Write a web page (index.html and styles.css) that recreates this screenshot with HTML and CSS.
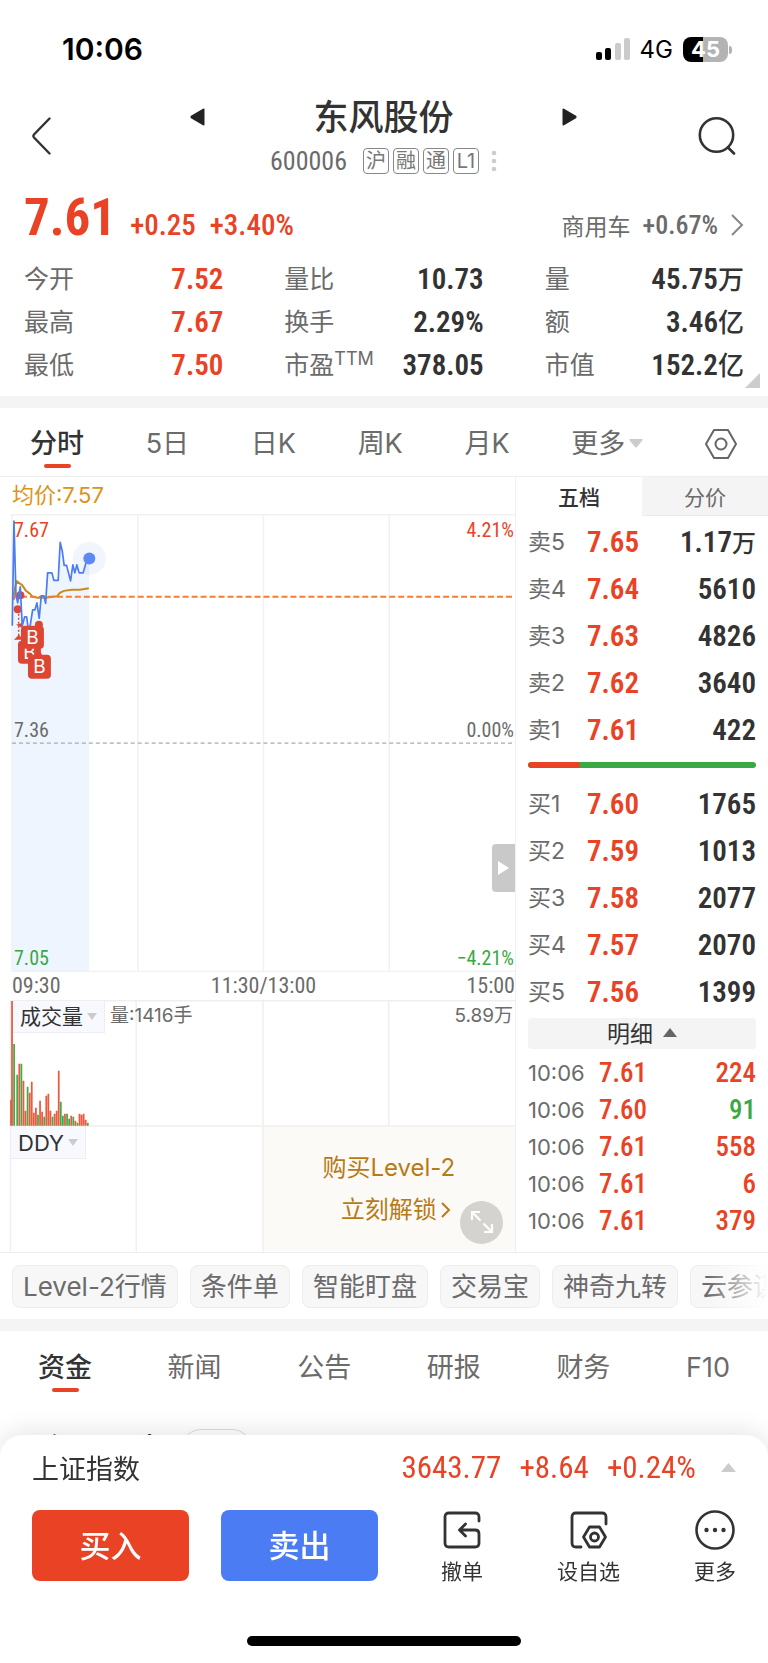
FILE: index.html
```html
<!DOCTYPE html>
<html lang="zh-CN">
<head>
<meta charset="utf-8">
<meta name="viewport" content="width=device-width, initial-scale=1">
<title>东风股份 600006</title>
<link rel="stylesheet" href="styles.css">
</head>
<body>
<div class="status">
  <span class="status-time">10:06</span>
  <span class="status-right">
    <svg width="34" height="23" viewBox="0 0 34 23" aria-hidden="true">
      <rect x="0" y="14" width="6" height="8" rx="2"/>
      <rect x="9" y="10" width="6" height="12" rx="2"/>
      <rect x="19" y="5" width="6" height="17" rx="2" fill="#cbcbcb"/>
      <rect x="28" y="0" width="6" height="22" rx="2" fill="#cbcbcb"/>
    </svg>
    <span class="status-net">4G</span>
    <span class="battery">45</span>
  </span>
</div>

<header class="head">
  <button class="icon-btn" aria-label="返回">
    <svg width="20" height="38" viewBox="0 0 20 38"><path d="M18.500 1.500 3 17.500Q1.800 19 3 20.500L18.500 36.500" fill="none" stroke="#333" stroke-width="2.400" stroke-linecap="round"/></svg>
  </button>
  <div class="head-mid">
    <button class="icon-btn step" aria-label="上一只">
      <svg width="15" height="18" viewBox="0 0 15 18"><path d="M14.500 1.500v15q0 1.500-1.500.8L1 10.200q-1.200-1.200 0-2.400L13 .700q1.500-.7 1.500.8z" fill="#222"/></svg>
    </button>
    <div class="head-title">
      <h1 class="name">东风股份</h1>
      <div class="code-row">
        <span class="code">600006</span>
        <span class="badges"><span class="badge">沪</span><span class="badge">融</span><span class="badge">通</span><span class="badge">L1</span></span>
        <svg width="6" height="22" viewBox="0 0 6 22" fill="#ccc" aria-hidden="true"><circle cx="3" cy="3" r="2.300"/><circle cx="3" cy="11" r="2.300"/><circle cx="3" cy="19" r="2.300"/></svg>
      </div>
    </div>
    <button class="icon-btn step" aria-label="下一只">
      <svg width="15" height="18" viewBox="0 0 15 18"><path d="M.500 1.500v15q0 1.500 1.500.8L14 10.200q1.200-1.200 0-2.400L2 .700Q.500 0 .500 1.500z" fill="#222"/></svg>
    </button>
  </div>
  <button class="icon-btn search" aria-label="搜索">
    <svg width="38" height="38" viewBox="0 0 38 38" fill="none" stroke="#333" stroke-width="2.600" stroke-linecap="round"><circle cx="18.500" cy="18" r="16.700"/><path d="m30 30.500 6 6"/></svg>
  </button>
</header>

<section class="quote">
  <div class="quote-top">
    <strong class="price">7.61</strong>
    <span class="chg">+0.25</span>
    <span class="chg">+3.40%</span>
    <a class="sector" href="#"><span class="sector-name">商用车</span><span class="sector-chg">+0.67%</span>
      <svg width="14" height="22" viewBox="0 0 14 22" fill="none" stroke="#888" stroke-width="2"><path d="m2 1 10 10L2 21"/></svg>
    </a>
  </div>
  <dl class="stats">
    <div class="stat"><dt>今开</dt><dd class="up">7.52</dd></div>
    <div class="stat"><dt>量比</dt><dd>10.73</dd></div>
    <div class="stat"><dt>量</dt><dd>45.75<i>万</i></dd></div>
    <div class="stat"><dt>最高</dt><dd class="up">7.67</dd></div>
    <div class="stat"><dt>换手</dt><dd>2.29%</dd></div>
    <div class="stat"><dt>额</dt><dd>3.46<i>亿</i></dd></div>
    <div class="stat"><dt>最低</dt><dd class="up">7.50</dd></div>
    <div class="stat"><dt>市盈<sup>TTM</sup></dt><dd>378.05</dd></div>
    <div class="stat"><dt>市值</dt><dd>152.2<i>亿</i></dd></div>
  </dl>
  <svg class="corner" width="15" height="15" viewBox="0 0 15 15" aria-hidden="true"><path d="M15 0v15H0z" fill="#ccc"/></svg>
</section>

<nav class="periods">
  <button class="tab on">分时</button>
  <button class="tab">5日</button>
  <button class="tab">日K</button>
  <button class="tab">周K</button>
  <button class="tab">月K</button>
  <button class="tab">更多<svg class="caret" width="14" height="9" viewBox="0 0 14 9"><path d="M1 0h12q1.500 0 .5 1.200L8 8q-1 1-2 0L.500 1.200Q-.500 0 1 0z" fill="#ccc"/></svg></button>
  <button class="icon-btn" aria-label="设置">
    <svg width="32" height="32" viewBox="0 0 32 32" fill="none" stroke="#666" stroke-width="2" stroke-linejoin="round"><path d="M9 2h14l8 14-8 14H9L1 16z"/><circle cx="16" cy="16" r="5.500"/></svg>
  </button>
</nav>

<main class="board">
  <section class="charts">
    <p class="avg">均价:7.57</p>
    <div class="plot">
      <svg class="plot-svg" viewBox="0 514 516 459" role="img" aria-label="分时走势">
        <path d="M12.300 626 14 521l2 74 1.700 8 2.600-16 2 39 2.400-9h2l2.300 17 3.700-24h2.300l2-7 2.300 15.500 2-22.500h2.700l1.700 7.500 2-30.500H52l2 7.500h4.300l2-38 2 8 2 15h2.400l4 15.500 2.300-16 2 8 2-8 2.300 8h4l3.700-13 2.300-2V973H12.300z" fill="#eef5fe"/>
        <g stroke="#f1f1f3" stroke-width="1.500"><path d="M11 514.700h505M138 514v459M264 514v459M390 514v459M11 972.300h505M12 514v459" fill="none"/></g>
        <path d="M12 743.500h503" stroke="#aaa" stroke-width="1.200" stroke-dasharray="4 3"/>
        <circle cx="89.500" cy="558.500" r="16.500" fill="#4b7cf3" fill-opacity=".08"/>
        <path d="M14 600q0-12 3-18.500 3 2.500 5 3.500l4 6 3.500 2.500L33 597l5 1h7l12-1.500 3-3.500 4-2 8-1h8l9-1.500" fill="none" stroke="#c98a17" stroke-width="2"/>
        <path d="M12 597h503" stroke="#f97b2c" stroke-width="2" stroke-dasharray="6 3"/>
        <g fill="#de4634"><circle cx="20.500" cy="595.500" r="4"/><circle cx="17.700" cy="609.500" r="4"/><path d="m14 640 5-5 4 5zM16 625l7-2-1 5z"/></g>
        <path d="M18.700 614v22" stroke="#de4634" stroke-width="1.500" stroke-dasharray="2 2"/>
        <path d="M12.300 626 14 521l2 74 1.700 8 2.600-16 2 39 2.400-9h2l2.300 17 3.700-24h2.300l2-7 2.300 15.500 2-22.500h2.700l1.700 7.500 2-30.500H52l2 7.500h4.300l2-38 2 8 2 15h2.400l4 15.500 2.300-16 2 8 2-8 2.300 8h4l3.700-13 2.300-2" fill="none" stroke="#4b7cf3" stroke-width="1.700" stroke-linejoin="round"/>
        <circle cx="89.500" cy="558.500" r="6" fill="#5c8af5"/>
        <g class="mark">
          <rect x="18" y="641" width="23" height="23" rx="4"/><text x="29.500" y="659">B</text>
          <circle cx="39" cy="625" r="4"/><rect x="21" y="626" width="23" height="23" rx="4"/><text x="32.500" y="644">B</text>
          <circle cx="38" cy="656" r="4"/><rect x="28" y="655" width="23" height="24" rx="4"/><text x="39.500" y="673">B</text>
        </g>
      </svg>
      <span class="ax ax-tl up">7.67</span><span class="ax ax-tr up">4.21%</span>
      <span class="ax ax-ml">7.36</span><span class="ax ax-mr">0.00%</span>
      <span class="ax ax-bl down">7.05</span><span class="ax ax-br down">−4.21%</span>
      <button class="fold" aria-label="收起盘口"><svg width="11" height="14" viewBox="0 0 11 14"><path d="M0 0v14l11-7z" fill="#fff"/></svg></button>
    </div>
    <div class="times"><span>09:30</span><span>11:30/13:00</span><span>15:00</span></div>
    <div class="volume">
      <svg class="plot-svg" viewBox="0 1000 516 252" role="img" aria-label="成交量">
        <path d="M263 1127h253v124H263z" fill="#fcfaf6"/>
        <path d="M10 1000.700h506M10 1126.300h506M10.500 1000v252M136.500 1000v252M263.500 1000v252M389.500 1000v127" fill="none" stroke="#efeff1" stroke-width="1.500"/>
        <g transform="translate(11 1126) scale(2.080 -1)" fill="none" stroke-width=".85">
          <path stroke="#ea5a3f" d="M0 0V26M.500 0V125M4 0V62M6 0V45M7 0V15M9 0V33M10 0V44M11 0V13M12 0V18M14 0V25M15 0V14M17 0V30M18 0V32M19 0V15M21 0V12M22 0V15M23 0V55M26 0V12M29 0V10M31 0V5M33 0V12M34 0V11M35 0V12M36 0V6"/>
          <path stroke="#45a84a" d="M1.500 0V82M3 0V51M5 0V62M8 0V39M13 0V11M16 0V9M20 0V9M24 0V24M25 0V10M27 0V12M28 0V7M30 0V9M32 0V3M37 0V3"/>
        </g>
      </svg>
      <div class="vol-head">
        <button class="tag">成交量<svg width="10" height="7" viewBox="0 0 10 7"><path d="M0 0h10L5 7z" fill="#ccc"/></svg></button>
        <span class="vol-now">量:1416手</span>
        <span class="vol-max">5.89万</span>
      </div>
      <button class="tag tag-ddy">DDY<svg width="10" height="7" viewBox="0 0 10 7"><path d="M0 0h10L5 7z" fill="#ccc"/></svg></button>
      <a class="unlock" href="#"><span>购买Level-2</span><span class="unlock-go">立刻解锁<svg width="10" height="18" viewBox="0 0 10 18"><path d="m1 2 7 7-7 7" fill="none" stroke="#b87a17" stroke-width="2"/></svg></span></a>
      <button class="expand" aria-label="全屏"><svg width="24" height="24" viewBox="0 0 24 24" fill="none" stroke="#fff" stroke-width="2.200"><path d="M2 10V2h8M2 2l8.500 8.500M22 14v8h-8M22 22l-8.500-8.500"/></svg></button>
    </div>
  </section>

  <aside class="depth">
    <div class="depth-tabs"><button class="dtab on">五档</button><button class="dtab">分价</button></div>
    <table class="book">
      <tr><th>卖5</th><td class="up">7.65</td><td>1.17<i>万</i></td></tr>
      <tr><th>卖4</th><td class="up">7.64</td><td>5610</td></tr>
      <tr><th>卖3</th><td class="up">7.63</td><td>4826</td></tr>
      <tr><th>卖2</th><td class="up">7.62</td><td>3640</td></tr>
      <tr><th>卖1</th><td class="up">7.61</td><td>422</td></tr>
    </table>
    <div class="ratio"><div class="ratio-sell" style="width:23%"></div></div>
    <table class="book">
      <tr><th>买1</th><td class="up">7.60</td><td>1765</td></tr>
      <tr><th>买2</th><td class="up">7.59</td><td>1013</td></tr>
      <tr><th>买3</th><td class="up">7.58</td><td>2077</td></tr>
      <tr><th>买4</th><td class="up">7.57</td><td>2070</td></tr>
      <tr><th>买5</th><td class="up">7.56</td><td>1399</td></tr>
    </table>
    <button class="detail">明细<svg width="14" height="9" viewBox="0 0 14 9"><path d="M0 9h14L7 0z" fill="#666"/></svg></button>
    <table class="book ticks">
      <tr><th>10:06</th><td class="up">7.61</td><td class="up">224</td></tr>
      <tr><th>10:06</th><td class="up">7.60</td><td class="down">91</td></tr>
      <tr><th>10:06</th><td class="up">7.61</td><td class="up">558</td></tr>
      <tr><th>10:06</th><td class="up">7.61</td><td class="up">6</td></tr>
      <tr><th>10:06</th><td class="up">7.61</td><td class="up">379</td></tr>
    </table>
  </aside>
</main>

<div class="chips">
  <button class="chip">Level-2行情</button>
  <button class="chip">条件单</button>
  <button class="chip">智能盯盘</button>
  <button class="chip">交易宝</button>
  <button class="chip">神奇九转</button>
  <button class="chip">云参谋</button>
</div>

<nav class="news">
  <button class="tab on">资金</button>
  <button class="tab">新闻</button>
  <button class="tab">公告</button>
  <button class="tab">研报</button>
  <button class="tab">财务</button>
  <button class="tab">F10</button>
</nav>
<section class="below"><h2 class="below-title">个股异动</h2><span class="below-pill"></span></section>

<footer class="sheet">
  <div class="index">
    <span class="index-name">上证指数</span>
    <span class="index-nums"><span>3643.77</span><span>+8.64</span><span>+0.24%</span></span>
    <svg width="15" height="9" viewBox="0 0 15 9" aria-hidden="true"><path d="M0 9h15L7.500 0z" fill="#ccc"/></svg>
  </div>
  <div class="actions">
    <button class="trade buy">买入</button>
    <button class="trade sell">卖出</button>
    <div class="tools">
      <button class="tool">
        <svg width="40" height="40" viewBox="0 0 40 40" fill="none" stroke="#333" stroke-width="2.800" stroke-linecap="round" stroke-linejoin="round"><path d="M37 11V7q0-4-4-4H7Q3 3 3 7v26q0 4 4 4h26q4 0 4-4v-9q0-4-4-4H18M23.500 14 17.500 20l6 6"/></svg>
        撤单</button>
      <button class="tool">
        <svg width="40" height="40" viewBox="0 0 40 40" fill="none" stroke="#333" stroke-width="2.800" stroke-linecap="round" stroke-linejoin="round"><path d="M37 14V7q0-4-4-4H7Q3 3 3 7v26q0 4 4 4h5M20.500 17h10l6 10-6 10h-10l-6-10z"/><circle cx="25.500" cy="27" r="4"/></svg>
        设自选</button>
      <button class="tool">
        <svg width="40" height="40" viewBox="0 0 40 40" fill="none" stroke="#333" stroke-width="2.600"><circle cx="20" cy="20" r="18.500"/><g fill="#333" stroke="none"><circle cx="11.500" cy="20" r="2.200"/><circle cx="20" cy="20" r="2.200"/><circle cx="28.500" cy="20" r="2.200"/></g></svg>
        更多</button>
    </div>
  </div>
  <div class="home"></div>
</footer>
</body>
</html>
```
FILE: styles.css
```css
:root {
  --up: #e94224;
  --down: #3aa845;
  --ink: #333;
  --mute: #6b6b6b;
  --text: Inter, "Noto Sans CJK SC", sans-serif;
  --num: "Roboto Condensed", Roboto, "Noto Sans CJK SC", sans-serif;
}
* { box-sizing: border-box; }
body {
  margin: 0;
  background: #fff;
  color: var(--ink);
  font-family: var(--text);
  overflow-x: hidden;
}
h1, h2, p, dl, dd { margin: 0; }
i { font-style: normal; line-height: 1; }
svg { display: block; flex: none; }
button {
  margin: 0;
  padding: 0;
  border: 0;
  background: none;
  color: inherit;
  font: inherit;
  white-space: nowrap;
}
a { color: inherit; text-decoration: none; }
.up { color: var(--up); }
.down { color: var(--down); }

.status {
  display: flex;
  justify-content: space-between;
  align-items: center;
  height: 94px;
  padding: 4px 40px 0 62px;
  color: #000;
}
.status-time { font-size: 30px; font-weight: 600; }
.status-right { display: flex; align-items: center; gap: 10px; }
.status-net { font-size: 24px; }
.battery {
  position: relative;
  width: 45px;
  border-radius: 8px;
  background: linear-gradient(90deg, #000 45%, #b3b3b3 45%);
  color: #fff;
  font-size: 22px;
  font-weight: 700;
  line-height: 25px;
  text-align: center;
}
.battery::after {
  content: "";
  position: absolute;
  right: -4px;
  top: 9px;
  width: 3px;
  height: 8px;
  border-radius: 0 3px 3px 0;
  background: #b3b3b3;
}

.head {
  display: grid;
  grid-template-columns: 1fr 55% 1fr;
  align-items: center;
  padding: 0 32px 0 31px;
}
.head > .icon-btn { padding-bottom: 4px; }
.head-mid { display: flex; justify-content: space-between; align-items: flex-start; }
.step { padding-top: 14px; }
.search { justify-self: end; }
.head-title { display: flex; flex-direction: column; align-items: center; }
.name { font-size: 35px; line-height: 46px; font-weight: 500; }
.code-row { display: flex; align-items: center; gap: 12px; height: 42px; }
.code { margin-right: 4px; color: var(--mute); font-family: var(--num); font-size: 26px; }
.badges { display: flex; gap: 4px; }
.badge {
  width: 26px;
  border: 1px solid #888;
  border-radius: 4px;
  color: #777;
  font-size: 20px;
  line-height: 24px;
  text-align: center;
}

.quote { position: relative; padding: 6px 24px 9px; border-bottom: 12px solid #f4f4f4; }
.quote-top { display: flex; align-items: baseline; gap: 14px; height: 70px; font-family: var(--num); }
.price { color: var(--up); font-size: 51px; line-height: 60px; }
.chg { color: var(--up); font-size: 29px; font-weight: 500; }
.sector { display: flex; align-items: center; gap: 12px; margin-left: auto; color: var(--mute); }
.sector-name { font-family: var(--text); font-size: 23px; }
.sector-chg { font-size: 26px; font-weight: 500; }
.stats { display: grid; grid-template-columns: repeat(3, 1fr); column-gap: 61px; }
.stat { display: flex; justify-content: space-between; align-items: center; height: 43px; }
.stat dt { color: var(--mute); font-size: 25px; line-height: 43px; white-space: nowrap; }
.stat sup { font-size: 18px; line-height: 0; }
.stat dd { font-family: var(--num); font-size: 29px; line-height: 43px; font-weight: 600; }
.stat i { font-family: var(--text); font-size: 26px; font-weight: 500; }
.corner { position: absolute; right: 8px; bottom: 8px; }

.periods {
  display: flex;
  justify-content: space-between;
  align-items: center;
  height: 69px;
  padding: 3px 31px 0 30px;
  border-bottom: 1px solid #efefef;
}
.tab {
  position: relative;
  display: flex;
  align-items: center;
  gap: 4px;
  color: var(--mute);
  font-size: 27px;
  line-height: 60px;
}
.tab.on { color: var(--ink); font-weight: 500; }
.tab.on::after {
  content: "";
  position: absolute;
  left: 25%;
  bottom: 6px;
  width: 50%;
  height: 4px;
  border-radius: 2px;
  background: var(--up);
}

.board { display: grid; grid-template-columns: 516fr 252fr; border-bottom: 1px solid #eee; }
.charts { border-right: 1px solid #f0f0f0; }
.avg { padding-left: 12px; color: #dd9316; font-size: 22px; line-height: 37px; }
.plot, .volume { position: relative; }
.plot-svg { width: 100%; height: auto; }
.mark rect, .mark circle { fill: #de4634; }
.mark text { fill: #fff; font: 19px var(--text); text-anchor: middle; }
.ax { position: absolute; color: var(--mute); font-family: var(--num); font-size: 20px; line-height: 26px; }
.ax.up { color: var(--up); }
.ax.down { color: var(--down); }
.ax-tl, .ax-ml, .ax-bl { left: 14px; }
.ax-tr, .ax-mr, .ax-br { right: 1px; }
.ax-tl, .ax-tr { top: 3px; }
.ax-ml, .ax-mr { bottom: 50%; }
.ax-bl, .ax-br { bottom: 1px; }
.fold {
  position: absolute;
  right: 0;
  top: 72%;
  display: flex;
  align-items: center;
  justify-content: center;
  width: 23px;
  height: 48px;
  border-radius: 4px 0 0 4px;
  background: #c9c9c9;
}
.times {
  display: flex;
  justify-content: space-between;
  padding-left: 12px;
  color: var(--mute);
  font-family: var(--num);
  font-size: 22px;
  line-height: 28px;
}
.vol-head {
  position: absolute;
  inset: 1px 2px auto 13px;
  display: flex;
  color: var(--mute);
  font-size: 19px;
  line-height: 30px;
}
.vol-now { margin-left: 5px; }
.vol-max { margin-left: auto; }
.tag {
  display: flex;
  align-items: center;
  gap: 4px;
  height: 32px;
  padding: 0 7px;
  border: solid #ededf2;
  border-width: 0 1px 1px 0;
  background: #f8f9fe;
  color: var(--ink);
  font-size: 21px;
}
.tag-ddy { position: absolute; left: 11px; top: 50.500%; font-size: 22px; }
.unlock {
  position: absolute;
  right: 0;
  bottom: 0;
  display: flex;
  flex-direction: column;
  align-items: center;
  justify-content: center;
  width: 49%;
  height: 50%;
  color: #b87a17;
  font-size: 24px;
  line-height: 42px;
}
.unlock-go { display: flex; align-items: center; gap: 4px; padding-left: 14px; }
.expand {
  position: absolute;
  right: 12px;
  bottom: 8px;
  display: flex;
  align-items: center;
  justify-content: center;
  width: 43px;
  height: 43px;
  border-radius: 50%;
  background: #d4d3cf;
}

.depth-tabs { display: grid; grid-template-columns: 1fr 1fr; height: 39px; }
.dtab { font-size: 21px; color: var(--mute); background: #f4f4f4; border-bottom: 1px solid #ebebeb; }
.dtab.on { background: #fff; color: var(--ink); font-weight: 500; border-color: #fff; }
.depth { display: flex; flex-direction: column; }
.book { margin: 3px 12px 0; border-spacing: 0; }
.book tr { height: 47px; }
.book th, .book td { padding: 0; line-height: 47px; white-space: nowrap; }
.book th { width: 59px; color: var(--mute); font-size: 23px; font-weight: 400; text-align: left; }
.book td { font-family: var(--num); font-size: 29px; font-weight: 600; text-align: left; }
.book td:last-child { text-align: right; }
.book i { font-family: var(--text); font-size: 24px; font-weight: 500; }
.ratio { margin: 8px 12px 10px; border-radius: 3px; background: var(--down); overflow: hidden; }
.ratio-sell { height: 6px; border-radius: 3px; background: var(--up); }
.detail {
  display: flex;
  align-items: center;
  justify-content: center;
  gap: 10px;
  height: 31px;
  margin: 2px 12px 3px;
  padding-bottom: 3px;
  border-radius: 4px;
  background: #f4f4f4;
  font-size: 23px;
}
.ticks tr { height: 37px; }
.ticks th, .ticks td { line-height: 37px; }
.ticks th { width: 71px; font-size: 22px; }
.ticks td { font-size: 27px; font-weight: 500; }

.chips {
  display: flex;
  gap: 12px;
  padding: 12px 12px 11px;
  overflow: hidden;
  border-bottom: 12px solid #f4f4f4;
  position: relative;
}
.chips::after {
  content: "";
  position: absolute;
  inset: 0 0 0 auto;
  width: 60px;
  background: linear-gradient(90deg, #fff0, #fff);
}
.chip {
  flex: none;
  padding: 0 10px;
  border: 1px solid #ededed;
  border-radius: 8px;
  background: #f7f7f7;
  color: var(--mute);
  font-size: 26px;
  line-height: 41px;
}
.news {
  display: flex;
  justify-content: space-between;
  align-items: flex-start;
  height: 70px;
  padding: 7px 38px 0;
}
.below { display: flex; align-items: flex-start; gap: 22px; height: 80px; padding: 27px 39px 0; }
.below-title { font-size: 30px; line-height: 40px; font-weight: 500; }
.below-pill { width: 71px; height: 40px; margin-top: 1px; border: 1px solid #ddd; border-radius: 20px; }

.sheet {
  position: fixed;
  inset: auto 0 0;
  padding: 0 32px 17px;
  border-radius: 22px 22px 0 0;
  background: #fff;
  box-shadow: 0 -4px 24px #0000001a;
}
.index { display: flex; align-items: center; height: 75px; padding-bottom: 11px; }
.index-name { font-size: 27px; }
.index-nums {
  display: flex;
  gap: 18px;
  margin: 0 25px 0 auto;
  color: var(--up);
  font-family: var(--num);
  font-size: 31px;
}
.actions { display: flex; align-items: flex-start; gap: 32px; }
.trade {
  flex: 0 1 157px;
  border-radius: 8px;
  color: #fff;
  font-size: 31px;
  line-height: 71px;
  font-weight: 500;
}
.buy { background: #e94224; }
.sell { background: #4b7cf3; }
.tools { display: flex; flex: 1; justify-content: space-between; padding-left: 31px; }
.tool { display: flex; flex-direction: column; align-items: center; gap: 8px; font-size: 21px; line-height: 28px; }
.home { width: 274px; height: 10px; margin: 50px auto 0; border-radius: 5px; background: #000; }
```
